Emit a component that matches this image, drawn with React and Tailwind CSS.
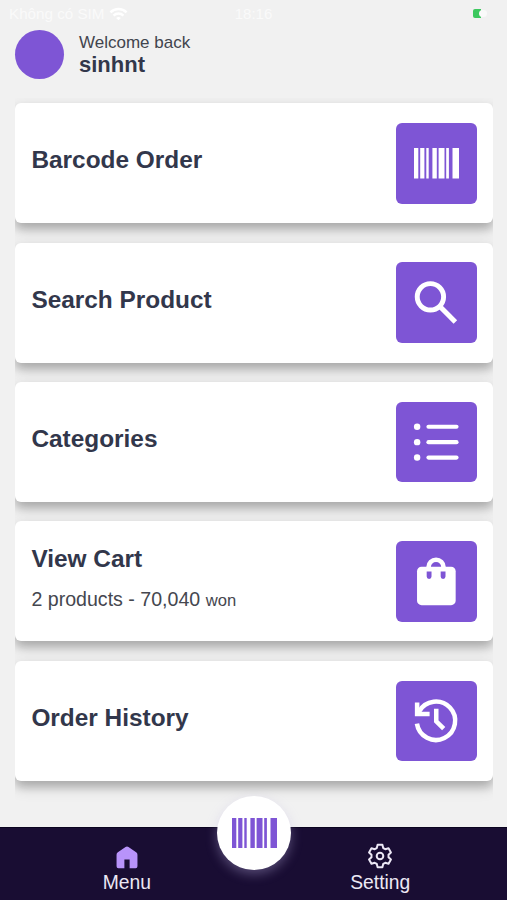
function BarcodeIcon({ className }) {
  return (
    <svg viewBox="0 0 45 30.5" className={className} fill="currentColor">
      <rect x="0" width="4.3" height="30.5" />
      <rect x="6.2" width="4.2" height="30.5" />
      <rect x="12.3" width="2.4" height="30.5" />
      <rect x="18.4" width="4.4" height="30.5" />
      <rect x="24.6" width="5.9" height="30.5" />
      <rect x="32.2" width="2.7" height="30.5" />
      <rect x="38.5" width="6.5" height="30.5" />
    </svg>
  );
}

function SearchIcon() {
  return (
    <svg viewBox="0 0 80 80" className="size-full" fill="none" stroke="currentColor">
      <circle cx="34.2" cy="34.6" r="13.1" strokeWidth="4.9" />
      <path d="M43.4 44L59 59.6" strokeWidth="5" />
    </svg>
  );
}

function ListIcon() {
  return (
    <svg viewBox="0 0 80 80" className="size-full" fill="currentColor">
      {[24.6, 39.9, 55.2].map((y) => (
        <g key={y}>
          <circle cx="21" cy={y} r="3.2" />
          <rect x="30.2" y={y - 2.1} width="32" height="4.2" rx="2.1" />
        </g>
      ))}
    </svg>
  );
}

function BagIcon() {
  return (
    <svg viewBox="0 0 80 80" className="size-full">
      <path d="M32.4 28V25.8a7.4 7.2 0 0 1 14.8 0V28" fill="none" stroke="currentColor" strokeWidth="4.6" />
      <rect x="20.9" y="25.6" width="38.4" height="38.2" rx="4.5" fill="currentColor" />
      <path d="M30.5 30.2h4.8v5.2a2.4 2.4 0 0 1-4.8 0zM44.4 30.2h4.8v5.2a2.4 2.4 0 0 1-4.8 0z" fill="#7e55d5" />
    </svg>
  );
}

function HistoryIcon() {
  return (
    <svg viewBox="0 0 80 80" className="size-full" fill="none" stroke="currentColor" strokeWidth="4.5">
      <path d="M20.8 42.4A19.1 19.1 0 1 0 23 30.2L20.5 33.2" />
      <path d="M21 21.4V32.8H33.4" />
      <path d="M40 27.6V40L47.4 47.4" />
    </svg>
  );
}

const gearOutline = [0, 60, 120, 180, 240, 300]
  .flatMap((tooth) => [
    [tooth - 22, 8.6],
    [tooth - 12, 11.5],
    [tooth + 12, 11.5],
    [tooth + 22, 8.6],
  ])
  .map(([angle, radius]) => {
    const a = ((angle - 90) * Math.PI) / 180;
    return `${(15 + radius * Math.cos(a)).toFixed(2)},${(15 + radius * Math.sin(a)).toFixed(2)}`;
  })
  .join(" ");

function GearIcon({ className }) {
  return (
    <svg viewBox="0 0 30 30" className={className} fill="none" stroke="currentColor" strokeWidth="2">
      <polygon points={gearOutline} strokeLinejoin="round" />
      <circle cx="15" cy="15" r="3.3" />
    </svg>
  );
}

function Card({ title, icon, children }) {
  return (
    <section className="flex h-[120px] shrink-0 items-center justify-between rounded-[6px] bg-white px-4 shadow-[0_6px_8px_rgba(0,0,0,0.18),0_6px_16px_rgba(0,0,0,0.16)]">
      <div className="pb-[6px] pl-[0.4px]">
        <h2 className="text-[24.4px] leading-[30px] font-bold">{title}</h2>
        {children}
      </div>
      <div className="flex size-[80.5px] items-center justify-center rounded-[6px] bg-[#7e55d5] text-white">
        {icon}
      </div>
    </section>
  );
}

export default function App() {
  return (
    <div className="flex h-[900px] w-[507px] flex-col overflow-hidden bg-[#f1f1f1] font-['Liberation_Sans',Arial,sans-serif] text-[#32374b]">
      <div className="grid h-[28px] shrink-0 grid-cols-3 items-center pr-[20px] pl-[20px] text-[15px] text-[#fafafa]">
        <div className="-ml-[11px] flex items-center gap-[5px]">
          <span className="text-[15.2px] whitespace-nowrap">Không có SIM</span>
          <svg viewBox="0 0 20 14" className="h-[14px] w-[19px]" fill="none" stroke="#ffffff" strokeWidth="2.6">
            <path d="M1.5 5.2a12.3 12.3 0 0 1 17 0M4.8 8.6a7.5 7.5 0 0 1 10.4 0" />
            <path d="M7.5 11.2a3.7 3.7 0 0 1 5 0L10 13.6z" fill="#ffffff" stroke="none" />
          </svg>
        </div>
        <span className="text-center">18:16</span>
        <div className="flex items-center justify-end pb-[2px]">
          <span className="h-[9px] w-[8px] rounded-l-[2px] bg-[#3cc85e]" />
          <span className="-ml-[2px] h-[7px] w-[8px] rounded-full bg-[#fafafa]" />
        </div>
      </div>

      <header className="flex h-[70px] shrink-0 gap-[15px] pt-[2px] pl-[15px]">
        <div className="size-[49px] rounded-full bg-[#7e55d5]" />
        <div className="pt-[3px]">
          <p className="text-[17px] leading-[20px] text-[#41444d]">Welcome back</p>
          <p className="text-[22px] leading-[24px] font-bold">sinhnt</p>
        </div>
      </header>

      <main className="mr-[14.5px] ml-[15px] flex h-[729px] shrink-0 flex-col gap-[19.4px] overflow-hidden pt-[5.3px]">
        <Card title="Barcode Order" icon={<BarcodeIcon className="h-[30.5px] w-[45px]" />} />
        <Card title="Search Product" icon={<SearchIcon />} />
        <Card title="Categories" icon={<ListIcon />} />
        <Card title="View Cart" icon={<BagIcon />}>
          <p className="-mb-[3px] pt-[11px] text-[19.6px] leading-[28px] text-[#45474f]">
            2 products - 70,040 <span className="text-[16.6px]">won</span>
          </p>
        </Card>
        <Card title="Order History" icon={<HistoryIcon />} />
      </main>

      <nav className="relative flex h-[73px] shrink-0 border-t border-[#0b0420] bg-[#190d33] text-[19.3px] leading-[24px] text-[#ece8f5]">
        <div className="flex w-1/2 flex-col items-center pt-[15px]">
          <svg viewBox="0 0 30 30" className="size-[28px]" fill="#b893fa">
            <path d="M15 3.8q.9 0 1.6.6l8.2 5.6q1.4 1 1.4 2.6v12.4q0 2-2 2h-6.4v-9.4h-5.6v9.4H5.8q-2 0-2-2V12.6q0-1.6 1.4-2.6l8.2-5.6q.7-.6 1.6-.6z" />
          </svg>
          <span>Menu</span>
        </div>
        <div className="flex w-1/2 flex-col items-center pt-[13px]">
          <GearIcon className="size-[30px]" />
          <span>Setting</span>
        </div>
        <button className="absolute -top-[32px] left-[217px] flex size-[74px] items-center justify-center rounded-full bg-white text-[#7e55d5] shadow-[0_4px_12px_rgba(190,180,230,0.38)]">
          <BarcodeIcon className="h-[30.5px] w-[45px]" />
        </button>
      </nav>
    </div>
  );
}
